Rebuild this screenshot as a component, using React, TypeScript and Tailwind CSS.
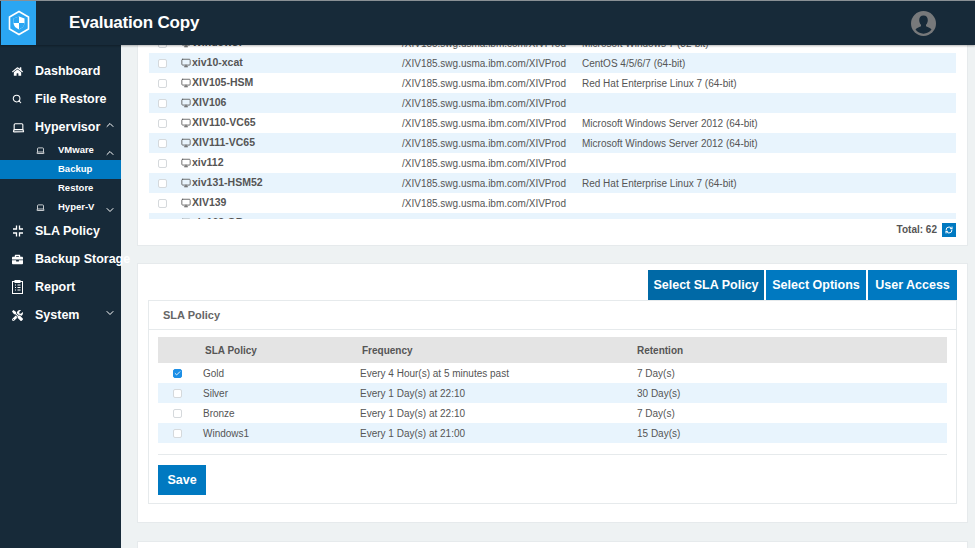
import { ChevronDown, ChevronUp, Monitor, Search, Laptop, Check, RefreshCw } from 'lucide-react'
import { FaHome, FaBriefcase, FaTools } from 'react-icons/fa'
import type { ReactNode } from 'react'

const vms = [
  { name: 'Windows7', os: 'Microsoft Windows 7 (32-bit)' },
  { name: 'xiv10-xcat', os: 'CentOS 4/5/6/7 (64-bit)' },
  { name: 'XIV105-HSM', os: 'Red Hat Enterprise Linux 7 (64-bit)' },
  { name: 'XIV106', os: '' },
  { name: 'XIV110-VC65', os: 'Microsoft Windows Server 2012 (64-bit)' },
  { name: 'XIV111-VC65', os: 'Microsoft Windows Server 2012 (64-bit)' },
  { name: 'xiv112', os: '' },
  { name: 'xiv131-HSM52', os: 'Red Hat Enterprise Linux 7 (64-bit)' },
  { name: 'XIV139', os: '' },
  { name: 'xiv163-GB', os: 'Microsoft Windows Server 2012 (64-bit)' },
]

const policies = [
  { name: 'Gold', freq: 'Every 4 Hour(s) at 5 minutes past', keep: '7 Day(s)', on: true },
  { name: 'Silver', freq: 'Every 1 Day(s) at 22:10', keep: '30 Day(s)', on: false },
  { name: 'Bronze', freq: 'Every 1 Day(s) at 22:10', keep: '7 Day(s)', on: false },
  { name: 'Windows1', freq: 'Every 1 Day(s) at 21:00', keep: '15 Day(s)', on: false },
]

function Logo() {
  return (
    <svg width="22" height="26" viewBox="0 0 22 26" fill="none">
      <path d="M11 1.5 20.5 7v12L11 24.5 1.5 19V7z" stroke="white" strokeWidth="1.6" />
      <path d="M11 6.5 16.5 8.5v4.5c0 3-2.4 5.2-5.5 6.5-3.1-1.3-5.5-3.500-5.500-6.500V8.500z" fill="white" />
      <path d="M11 6.500v6.500H5.500v-4.500zM11 13h5.500c0 3-2.400 5.200-5.500 6.500z" fill="#2ba6f2" />
    </svg>
  )
}

function Avatar() {
  return (
    <svg width="25" height="25" viewBox="0 0 25 25">
      <circle cx="12.500" cy="12.500" r="12.500" fill="#77797b" />
      <path d="M12.500 4.500c-2.800 0-4.300 2-4.300 4.700 0 1.900.8 3.500 1.800 4.500v1.500c-2.200 1-4.500 1.700-5.500 3.300a9.800 9.800 0 0 0 16 0c-1-1.600-3.300-2.300-5.500-3.300v-1.500c1-1 1.800-2.600 1.800-4.500 0-2.700-1.500-4.700-4.300-4.700z" fill="#172a39" />
    </svg>
  )
}

function SlaIcon() {
  return (
    <svg width="12" height="12" viewBox="0 0 12 12" fill="none" stroke="white" strokeWidth="1.300">
      <path d="M4.500 0.500v3.500H1M7.500 0.500v3.500H11M4.500 11.500V8H1M7.500 11.500V8H11" />
    </svg>
  )
}

function ReportIcon() {
  return (
    <svg width="11" height="14" viewBox="0 0 11 14" fill="none" stroke="white" strokeWidth="1">
      <rect x="0.500" y="1.500" width="10" height="12" />
      <rect x="3" y="0.500" width="5" height="2" fill="white" />
      <path d="M3 5h1M3 7.500h1M3 10h1M5.500 5h3M5.500 7.500h3M5.500 10h3" />
    </svg>
  )
}

function NavItem({ icon, label, chevron }: { icon: ReactNode; label: string; chevron?: 'up' | 'down' }) {
  return (
    <div className="h-7 flex items-center text-white text-[12.500px] font-bold whitespace-nowrap">
      <span className="w-[35px] pl-[12px] flex items-center shrink-0">{icon}</span>
      <span className="flex-1">{label}</span>
      {chevron === 'up' && <ChevronUp size={12} className="mr-[5px] mb-1" />}
      {chevron === 'down' && <ChevronDown size={12} className="mr-[5px] mb-1" />}
    </div>
  )
}

function SubItem({ label, chevron }: { label: string; chevron: 'up' | 'down' }) {
  return (
    <div className="h-[19px] flex items-center text-white text-[9.500px] font-bold">
      <span className="w-[58px] pl-[36px] shrink-0"><Laptop size={9} /></span>
      <span className="flex-1">{label}</span>
      {chevron === 'up' ? <ChevronUp size={12} className="mr-[5px] mt-1" /> : <ChevronDown size={12} className="mr-[5px] mt-1" />}
    </div>
  )
}

function Box({ on }: { on?: boolean }) {
  return (
    <span className={`w-[9px] h-[9px] rounded-[2px] flex items-center justify-center shrink-0 border ${on ? 'bg-[#1d8fe6] border-[#1d8fe6]' : 'bg-white border-[#d5d9dc]'}`}>
      {on && <Check size={7} color="white" strokeWidth={3} />}
    </span>
  )
}

export default function App() {
  return (
    <div className="w-[975px] h-[548px] overflow-hidden flex flex-col bg-[#eef2f3] text-[#555] font-['Liberation_Sans',Arial,sans-serif]">
      <header className="h-[45px] shrink-0 bg-[#172a39] border-t border-[#8a9095] flex items-stretch shadow-[0_1px_2px_rgba(0,0,0,0.3)] z-10">
        <div className="w-[35px] ml-px bg-[#2ba6f2] flex items-center justify-center">
          <Logo />
        </div>
        <div className="flex-1 pl-[33px] flex items-center text-white text-[17px] font-bold tracking-[-0.2px]">Evaluation Copy</div>
        <div className="pr-[39px] flex items-center"><Avatar /></div>
      </header>
      <div className="flex-1 flex min-h-0">
        <aside className="w-[121px] shrink-0 bg-[#172a39] pt-3">
          <NavItem icon={<FaHome size={11} />} label="Dashboard" />
          <NavItem icon={<Search size={10} strokeWidth={2.500} />} label="File Restore" />
          <NavItem icon={<Laptop size={13} />} label="Hypervisor" chevron="up" />
          <SubItem label="VMware" chevron="up" />
          <div className="h-[19px] bg-[#0079c1] pl-[58px] flex items-center text-white text-[9.500px] font-bold">Backup</div>
          <div className="h-[19px] pl-[58px] flex items-center text-white text-[9.500px] font-bold">Restore</div>
          <SubItem label="Hyper-V" chevron="down" />
          <NavItem icon={<SlaIcon />} label="SLA Policy" />
          <NavItem icon={<FaBriefcase size={11} />} label="Backup Storage" />
          <NavItem icon={<ReportIcon />} label="Report" />
          <NavItem icon={<FaTools size={11} />} label="System" chevron="down" />
        </aside>
        <main className="flex-1 min-w-0 pl-[16px] pr-[7px]">
          <section className="h-[201px] bg-white border-b border-r border-l border-[#e6eaec] px-[11px] pb-[5px] flex flex-col">
            <div className="h-[174px] overflow-hidden shrink-0">
              <div className="-mt-[12px]">
                {vms.map((vm, i) => (
                  <div key={vm.name} className={`h-5 flex items-center text-[10px] ${i % 2 === 1 ? 'bg-[#e8f4fd]' : 'bg-white'}`}>
                    <span className="w-[32px] pl-[9px] shrink-0"><Box /></span>
                    <Monitor size={10} className="shrink-0 mr-[1px]" />
                    <span className="w-[210px] font-bold shrink-0 text-[10.500px]">{vm.name}</span>
                    <span className="w-[180px] shrink-0">/XIV185.swg.usma.ibm.com/XIVProd</span>
                    <span>{vm.os}</span>
                  </div>
                ))}
              </div>
            </div>
            <div className="flex-1 flex items-center justify-end gap-[5px] text-[10px] font-bold">
              <span>Total: 62</span>
              <span className="w-[14px] h-[14px] bg-[#0079c1] flex items-center justify-center">
                <RefreshCw size={8} color="white" strokeWidth={3} />
              </span>
            </div>
          </section>
          <section className="mt-[17px] h-[260px] bg-white border border-[#e6eaec] px-[10px] pt-[6px]">
            <div className="flex justify-end gap-[2px] h-[30px]">
              <button className="w-[116px] bg-[#0069a6] text-white text-[12.500px] font-bold">Select SLA Policy</button>
              <button className="w-[100px] bg-[#0079c1] text-white text-[12.500px] font-bold">Select Options</button>
              <button className="w-[89px] bg-[#0079c1] text-white text-[12.500px] font-bold">User Access</button>
            </div>
            <div className="h-[204px] border border-[#e6eaec] flex flex-col">
              <div className="h-[29px] shrink-0 border-b border-[#e6eaec] pl-[14px] flex items-center text-[11px] font-bold text-[#666]">SLA Policy</div>
              <div className="px-[9px] pt-[7px]">
                <div className="h-[26px] bg-[#e4e4e4] flex items-center text-[10px] font-bold">
                  <span className="w-[47px] shrink-0" />
                  <span className="w-[157px] shrink-0">SLA Policy</span>
                  <span className="w-[275px] shrink-0">Frequency</span>
                  <span>Retention</span>
                </div>
                {policies.map((p, i) => (
                  <div key={p.name} className={`h-5 flex items-center text-[10px] ${i % 2 === 1 ? 'bg-[#e8f4fd]' : 'bg-white'}`}>
                    <span className="w-[45px] pl-[15px] shrink-0"><Box on={p.on} /></span>
                    <span className="w-[157px] shrink-0">{p.name}</span>
                    <span className="w-[277px] shrink-0">{p.freq}</span>
                    <span>{p.keep}</span>
                  </div>
                ))}
                <div className="mt-[11px] border-t border-[#e6eaec] pt-[10px]">
                  <button className="w-[48px] h-[30px] bg-[#0079c1] text-white text-[12.500px] font-bold">Save</button>
                </div>
              </div>
            </div>
          </section>
          <section className="mt-[18px] h-[40px] bg-white border border-[#e6eaec]" />
        </main>
      </div>
    </div>
  )
}
